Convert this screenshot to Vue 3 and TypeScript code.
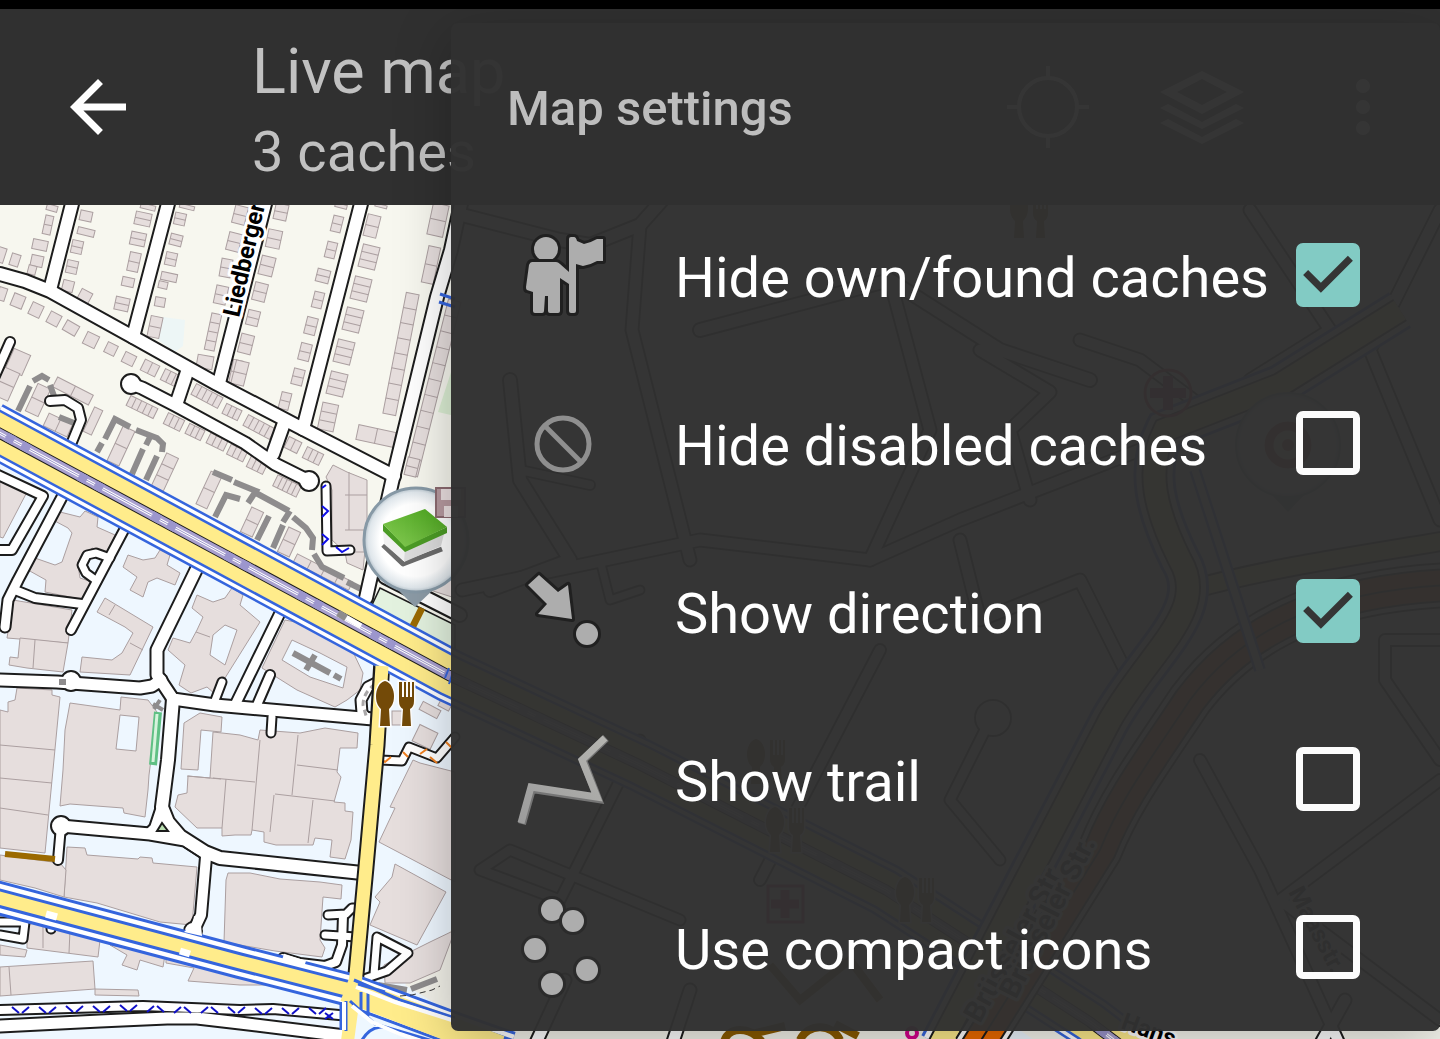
<script setup lang="ts">
import { reactive } from 'vue'

type IconName = 'owner' | 'disabled' | 'direction' | 'trail' | 'compact'

interface Setting {
  id: string
  label: string
  icon: IconName
  on: boolean
}

const settings = reactive<Setting[]>([
  { id: 'hide-own', label: 'Hide own/found caches', icon: 'owner', on: true },
  { id: 'hide-disabled', label: 'Hide disabled caches', icon: 'disabled', on: false },
  { id: 'show-direction', label: 'Show direction', icon: 'direction', on: true },
  { id: 'show-trail', label: 'Show trail', icon: 'trail', on: false },
  { id: 'compact-icons', label: 'Use compact icons', icon: 'compact', on: false },
])

// Row houses: centre x, centre y, width, height, rotation, number of units
// (negative counts split the block from left to right).
type House = [number, number, number, number, number, number]
const houses: House[] = [
  [52, 208, 11, 6, 15, 1], [48, 225, 8, 19, 12, 2], [40, 245, 15, 10, 12, 1], [37, 261, 12, 11, 12, 1], [32, 270, 8, 9, 15, 1],
  [15, 260, 9, 12, 18, 1], [1, 255, 8, 15, 18, 1], [2, 294, 8, 13, 18, 1], [18, 301, 12, 13, 22, 1], [36, 310, 12, 13, 25, 1],
  [54, 319, 12, 12, 28, 1], [71, 328, 14, 11, 30, 1], [91, 340, 13, 13, 26, 1], [111, 349, 11, 11, 26, 1], [129, 359, 12, 11, 26, 1],
  [150, 368, 16, 12, 26, -2], [171, 378, 18, 12, 26, -3], [86, 216, 12, 10, 12, 1], [86, 232, 17, 7, 14, 1], [77, 247, 11, 13, 12, 2],
  [72, 267, 11, 13, 12, 2], [68, 286, 11, 11, 14, 1], [85, 296, 12, 11, 28, 1], [143, 219, 16, 13, 12, 2], [138, 239, 15, 13, 12, 2],
  [134, 262, 11, 19, 12, 2], [128, 282, 12, 9, 12, 1], [122, 304, 14, 13, 12, 2], [148, 207, 15, 5, 14, 1], [187, 207, 15, 4, 14, 1],
  [180, 219, 11, 12, 12, 2], [176, 240, 12, 11, 14, 2], [171, 259, 11, 13, 12, 2], [169, 277, 16, 8, 12, 1], [163, 285, 9, 7, 12, 1],
  [160, 302, 10, 9, 10, 1], [155, 327, 12, 21, 12, 2], [240, 215, 13, 18, 14, 2], [234, 242, 13, 18, 14, 2], [226, 268, 11, 18, 10, 2],
  [221, 295, 12, 18, 12, 2], [213, 332, 10, 37, 12, 4], [205, 362, 16, 13, 10, 1], [236, 372, 10, 24, 12, 2],
  [281, 212, 13, 16, 12, 2], [274, 239, 14, 18, 12, 2], [267, 266, 14, 19, 14, 2], [260, 292, 13, 18, 14, 2], [253, 318, 12, 15, 14, 2],
  [246, 344, 13, 19, 14, 2], [240, 373, 13, 24, 14, 2], [341, 206, 12, 4, 14, 1], [337, 224, 10, 16, 14, 2], [331, 250, 10, 16, 14, 2],
  [323, 276, 13, 13, 14, 2], [318, 300, 10, 16, 14, 2], [311, 326, 11, 17, 14, 2], [305, 352, 11, 17, 14, 2], [298, 377, 11, 16, 14, 2],
  [285, 401, 10, 17, 14, 2], [381, 206, 12, 3, 14, 1], [372, 226, 13, 22, 14, 2], [369, 257, 17, 23, 14, 3], [361, 289, 17, 23, 14, 3],
  [353, 320, 17, 23, 14, 3], [344, 352, 17, 23, 14, 3], [337, 384, 17, 23, 14, 3], [328, 417, 16, 27, 12, 3], [438, 220, 16, 32, 12, 2],
  [431, 265, 12, 37, 12, 2], [401, 354, 13, 123, 11, 8], [433, 388, 13, 180, 14, 11], [376, 436, 38, 15, 12, -2],
  [232, 412, 17, 11, 26, -3], [259, 427, 30, 12, 28, -5], [142, 407, 30, 11, 26, -5], [174, 422, 18, 12, 26, -3], [195, 432, 17, 11, 26, -3],
  [217, 442, 19, 11, 26, -3], [237, 453, 18, 11, 26, -3], [257, 465, 18, 12, 26, -3], [207, 396, 30, 12, 28, -5], [293, 445, 14, 12, 26, -2],
  [313, 456, 18, 12, 26, -3], [287, 486, 26, 12, 26, -5], [18, 362, 18, 22, 24, 1], [6, 384, 17, 30, 24, 2], [73, 391, 40, 11, 27, -2],
  [93, 421, 9, 27, 25, 1], [38, 400, 14, 30, 25, 2], [58, 425, 26, 14, 25, -2], [121, 446, 13, 38, 25, 2], [165, 472, 13, 36, 25, 3],
  [209, 490, 12, 36, 25, 2], [252, 522, 13, 27, 25, 2], [289, 542, 13, 27, 25, 2], [323, 572, 62, 9, 27, -4], [412, 467, 12, 18, 14, 2],
  [425, 737, 20, 18, 26, 1], [430, 710, 20, 9, 28, 1], [400, 718, 16, 14, 0, 1], [446, 703, 12, 12, 28, 1],
]

const buildings: string[] = [
  '333,465 347,472 367,480 367,530 363,570 347,563 345,552 332,540 332,490 326,477',
  '0,477 27,492 3,538 0,537',
  '60,512 80,517 85,511 98,517 97,527 115,535 108,553 92,548 78,565 80,578 95,583 85,600 45,592 46,580 28,570 32,557 55,565 62,562 72,533 68,528 53,520',
  '128,555 143,560 155,558 160,550 170,555 167,565 180,573 175,585 157,578 148,582 143,597 130,590 137,577 123,567',
  '105,598 153,627 130,675 80,672 82,657 112,660 122,653 133,633 125,627 97,612',
  '13,600 72,610 68,643 7,638',
  '20,638 68,643 63,672 27,668 9,665 10,657 18,658',
  '197,595 213,602 225,598 232,588 243,595 240,605 260,622 215,694 207,687 191,693 179,685 185,665 168,650 173,638 190,643 197,630 203,617 192,608',
  '285,620 300,623 333,638 353,652 363,673 360,690 347,700 335,707 297,690 262,668',
  '17,688 52,690 52,695 60,697 45,853 0,848 0,710 8,712 8,702 15,700',
  '70,703 120,710 121,697 148,700 157,712 149,775 148,790 145,817 124,813 123,808 70,804 60,806 63,770 65,730',
  '184,723 200,713 222,717 221,732 201,730 198,770 181,769',
  '213,732 240,735 258,740 260,730 300,733 325,728 358,733 357,748 340,748 337,772 341,777 334,802 345,803 345,811 353,812 351,840 345,859 330,857 332,840 315,838 313,845 276,845 264,842 264,832 252,830 251,835 235,835 222,836 222,828 197,828 175,807 178,795 187,793 188,776 210,778',
  '67,847 85,848 87,855 138,859 140,857 152,858 153,863 197,867 192,925 160,922 97,903 64,897',
  '0,855 60,863 66,870 64,897 35,888 0,880',
  '228,873 250,873 280,879 320,882 342,885 341,899 323,897 320,940 325,948 322,957 275,951 240,945 224,942 226,880',
  '27,925 45,920 100,940 98,957 27,948',
  '0,945 27,950 25,957 0,955',
  '0,967 93,961 95,989 0,996',
  '110,945 165,955 163,967 140,960 137,970 122,965 127,955',
  '95,989 138,990 139,996 95,995',
  '166,953 196,960 240,972 275,985 240,985 188,981 194,968 166,963',
  '413,760 420,763 455,772 455,882 379,842 395,808 390,807',
  '395,864 446,892 417,945 370,925 380,902 375,897 392,877',
  '455,930 440,970 410,983 385,983 384,965 410,952 430,942',
  '384,560 455,560 455,598 430,590',
]

const courts: string[] = [
  '213,635 225,625 237,630 225,665 210,655',
  '292,640 320,653 347,667 343,688 310,677 282,660',
  '120,715 139,717 136,751 116,749',
]

const walls =
  'M260,740L252,830M298,735L292,795M297,765L338,770M213,778L255,782M275,794L335,801M313,800L308,843M274,795L270,832M226,779L222,828M0,745L55,750M0,778L52,783M0,808L48,815M109,615L115,605M130,643L143,650M35,640L33,668M196,632L210,637M43,922V948M70,930L69,953M9,967L11,995M187,776L221,779M345,530H367M345,495H367M349,472L349,530M345,552H367'

interface Road { pts: string; w: number }
const roads: Road[] = [
  { pts: '0,274 25,281 50,291 133,337 217,384 303,429 394,476', w: 12 },
  { pts: '74,196 50,290', w: 12 },
  { pts: '170,196 133,337', w: 12 },
  { pts: '267,196 219,383', w: 12 },
  { pts: '363,196 303,429', w: 12 },
  { pts: '464,190 451,250 437,297 392,482 366,598', w: 12 },
  { pts: '385,577 460,615', w: 12 },
  { pts: '131,384 142,388 175,405 245,443 275,464 309,481', w: 11 },
  { pts: '187,372 177,402', w: 12 },
  { pts: '284,423 273,454', w: 12 },
  { pts: '10,342 -6,378', w: 8 },
  { pts: '50,401 65,400 78,408 81,420 72,442', w: 8 },
  { pts: '-2,680 57,682 140,688 152,686 161,680', w: 11 },
  { pts: '197,568 180,603 157,650 157,675 173,699 215,705 373,719', w: 11 },
  { pts: '173,699 168,760 162,807 168,822 180,836 205,852 220,858 362,873', w: 12 },
  { pts: '162,807 155,828 150,833', w: 10 },
  { pts: '61,826 150,834 185,840 205,853', w: 11 },
  { pts: '61,826 58,860', w: 8 },
  { pts: '206,857 201,915 193,932', w: 10 },
  { pts: '-6,473 43,496 12,550 -4,550', w: 8 },
  { pts: '62,497 18,580 8,600 5,627', w: 9 },
  { pts: '15,590 35,598 82,604', w: 8 },
  { pts: '124,530 71,630', w: 8 },
  { pts: '110,558 96,553 87,555 82,565 86,573 97,581', w: 7 },
  { pts: '280,613 236,703', w: 9 },
  { pts: '270,675 257,705', w: 8 },
  { pts: '272,717 271,733', w: 7 },
  { pts: '222,682 214,703', w: 7 },
  { pts: '380,681 368,687 361,700 362,713 368,719', w: 9 },
  { pts: '326,486 327,551 350,550', w: 7 },
  { pts: '380,760 402,761 409,747 437,758 455,737', w: 7 },
  { pts: '0,922 25,922 23,939 0,935', w: 7 },
  { pts: '52,915 51,929', w: 7 },
  { pts: '328,915 346,914 352,908 360,908', w: 7 },
  { pts: '325,935 356,937', w: 7 },
  { pts: '343,915 342,945 336,962 325,966 300,963 283,958', w: 8 },
  { pts: '361,980 387,971 408,953 377,937 374,974', w: 7 },
  { pts: '0,1026 20,1025 100,1021 167,1018 197,1018 240,1023 345,1036', w: 11 },
  { pts: '0,1010 143,1006 240,1010 273,1009 350,1016', w: 8 },
  // streets east of the park
  { pts: '462,215 560,240 590,245 640,225 680,180', w: 12 },
  { pts: '640,225 632,330 690,560', w: 11 },
  { pts: '510,380 520,480 570,560 490,590', w: 12 },
  { pts: '462,590 700,540 870,560 960,520 1140,450', w: 11 },
  { pts: '520,470 590,485', w: 8 },
  { pts: '600,560 610,600 640,590', w: 7 },
  { pts: '700,330 890,280 1000,350 1090,380', w: 12 },
  { pts: '890,280 930,430 870,560', w: 11 },
  { pts: '980,350 1050,392 1010,430 1030,500', w: 11 },
  { pts: '960,540 980,620 1080,580 1130,680', w: 11 },
  { pts: '1080,340 1140,360 1220,420', w: 11 },
  { pts: '1250,210 1330,330 1250,380', w: 11 },
  { pts: '1440,210 1370,350 1440,520', w: 11 },
  { pts: '640,740 560,900 480,870 510,850 680,920', w: 9 },
  { pts: '880,650 760,880', w: 10 },
  { pts: '990,720 950,800 1000,860', w: 9 },
  { pts: '1200,760 1260,870 1340,1045', w: 10 },
  { pts: '1440,780 1280,900 1440,1020', w: 10 },
  { pts: '1440,640 1385,640 1385,680 1440,760', w: 10 },
  { pts: '535,1045 565,980', w: 11 },
  { pts: '672,1045 690,990', w: 11 },
  { pts: '1320,1045 1345,1000', w: 11 },
]

const discs: [number, number, number][] = [
  [131, 384, 10], [309, 481, 10], [71, 681, 10], [61, 826, 10], [193, 931, 9], [5, 627, 5], [993, 718, 18],
]

const paths =
  'M18,411L30,386M33,381L42,376L49,380M50,385L54,396M59,417L74,423M97,452L102,443M105,439L115,419L130,427M136,430L157,438L163,444L162,452M150,437L146,445M143,449L132,474M157,456L146,480M213,472L232,480M234,482L256,491L248,503M256,493L289,511M215,517L226,495L240,499M290,511L283,522M269,516L257,540M283,525L273,548M293,517L306,528L313,538L312,550M314,554L322,567L344,578M347,582L363,590M293,653L330,673M315,655L306,670M334,675L341,679M378,985L407,990M411,989L437,979'

const trunk = 'M-10,428L220,552L450,676L640,765L886,890L1090,1022L1140,1060'
const avenue = 'M-5,897L240,962L350,990L450,1027L510,1048'
const motorway = 'M1450,585C1340,590 1250,620 1190,700C1150,760 1120,800 1100,850L975,1050'
const ringRoad = 'M1400,310L1280,385L1165,430C1145,470 1155,510 1180,560C1210,610 1150,650 1110,720L940,1045'
const feeder = 'M1190,590C1260,570 1330,560 1450,540'

function splitLines(h: House): string {
  const [, , w, ht, , n] = h
  const parts = Math.abs(n)
  let d = ''
  for (let i = 1; i < parts; i++) {
    if (n > 0) {
      const y = -ht / 2 + (ht * i) / parts
      d += `M${-w / 2},${y}H${w / 2}`
    } else {
      const x = -w / 2 + (w * i) / parts
      d += `M${x},${-ht / 2}V${ht / 2}`
    }
  }
  return d
}

// Zigzag marks along the closed cycle way in the south.
const zigzags: string[] = []
for (let i = 0; i < 12; i++) {
  const x = 20 + i * 27
  const y = i < 5 ? 1010 - Math.floor(i / 2) : 1008 + Math.floor(i / 3)
  zigzags.push(i > 4 && i < 8 ? `M${x - 8},${y + 3}l7,-6M${x + 2},${y - 3}l7,6` : `M${x - 8},${y - 3}l7,6M${x + 2},${y + 3}l7,-6`)
}
const zigzagPath = zigzags.join('')

const eateries: [number, number][] = [[396, 704], [1030, 216], [767, 762], [786, 830], [916, 900]]
</script>

<template>
  <div class="app">
    <div class="status"></div>
    <header class="bar">
      <button class="bar-button" type="button" aria-label="Back">
        <svg viewBox="0 0 24 24"><path fill="#fff" d="M20 11H7.83l5.59-5.59L12 4l-8 8 8 8 1.41-1.41L7.83 13H20z" /></svg>
      </button>
      <div class="titles">
        <h1>Live map</h1>
        <p>3 caches</p>
      </div>
      <div class="actions">
        <button class="bar-button" type="button" aria-label="Follow my location">
          <svg viewBox="0 0 84 84" fill="none" stroke="#fff" stroke-width="4"><circle cx="42" cy="42" r="29" /><path d="M42 1v12M42 71v12M1 42h12M71 42h12" /></svg>
        </button>
        <button class="bar-button" type="button" aria-label="Select map">
          <svg viewBox="0 0 84 84" fill="#fff"><path fill-rule="evenodd" d="M42 6L84 27 42 49 0 27zM42 14L17 27 42 40 67 27z" /><path d="M0 43l8-4 34 18 34-18 8 4-42 21zM0 58l8-4 34 18 34-18 8 4-42 21z" /></svg>
        </button>
        <button class="bar-button more" type="button" aria-label="More options">
          <svg viewBox="0 0 84 84" fill="#fff"><circle cx="42" cy="21" r="7" /><circle cx="42" cy="42" r="7" /><circle cx="42" cy="63" r="7" /></svg>
        </button>
      </div>
    </header>

    <main class="map">
      <svg viewBox="0 205 1440 834" preserveAspectRatio="xMinYMin slice" role="img" aria-label="Street map">
        <defs>
          <radialGradient id="pinFill"><stop offset="0.7" stop-color="#fff" /><stop offset="0.92" stop-color="#dfe6eb" /><stop offset="1" stop-color="#b4c1ca" /></radialGradient>
          <linearGradient id="lid" x1="0" y1="1" x2="1" y2="0"><stop offset="0" stop-color="#86cc55" /><stop offset="1" stop-color="#4aa51c" /></linearGradient>
        </defs>
        <rect y="205" width="1440" height="900" fill="#eef7ff" />
        <path d="M0,205H1440V1100H1120L640,765L450,676L0,433Z" fill="#f7f7ef" />
        <path d="M455,925L405,985L455,1015V1045H960V850L600,745L480,760Z" fill="#f3f2ea" />
        <path d="M163,317L185,320L183,346L175,352L158,340Z" fill="#edf6f6" />
        <path d="M455,360L438,412L455,416Z" fill="#dcefd4" />

        <g class="building">
          <g v-for="(h, i) in houses" :key="'h' + i" :transform="`translate(${h[0]} ${h[1]}) rotate(${h[4]})`">
            <rect :x="-h[2] / 2" :y="-h[3] / 2" :width="h[2]" :height="h[3]" />
            <path :d="splitLines(h)" />
          </g>
          <polygon v-for="(b, i) in buildings" :key="'b' + i" :points="b" />
        </g>
        <polygon v-for="(c, i) in courts" :key="'c' + i" class="court" :points="c" />
        <path :d="walls" class="wall" />
        <path d="M380,588L455,625V650L372,605Z" fill="#e3f2df" stroke="#1c1c1c" stroke-width="1.5" />
        <path :d="paths" fill="none" stroke="#8e8c8d" stroke-width="6" />
        <path d="M158,712L153,765" stroke="#5fc084" stroke-width="8" /><path d="M157,714L153,762" stroke="#d6f3dc" stroke-width="3" />

        <g fill="none" stroke-linejoin="round" stroke-linecap="round">
          <polyline v-for="(r, i) in roads" :key="'k' + i" :points="r.pts" stroke="#1c1c1c" :stroke-width="r.w + 4" />
          <circle v-for="(d, i) in discs" :key="'o' + i" :cx="d[0]" :cy="d[1]" :r="d[2]" fill="#fff" stroke="#1c1c1c" stroke-width="2" />
          <polyline v-for="(r, i) in roads" :key="'w' + i" :points="r.pts" stroke="#fff" :stroke-width="r.w" />
        </g>
        <path d="M162,823L157,831H168Z" fill="#b9dfb0" stroke="#1c1c1c" stroke-width="2" />
        <path d="M59,682H66" stroke="#8e8c8d" stroke-width="6" />
        <path d="M153,704L163,710M160,700L154,709" stroke="#8e8c8d" stroke-width="4" />
        <path d="M375,684Q363,693 363,705L367,719" fill="none" stroke="#a9a7a8" stroke-width="3" stroke-dasharray="6 4" />
        <path d="M322,488l4,-3M322,506l6,5l-6,6M322,534l6,5l-6,6M336,547l6,5l7,-4" fill="none" stroke="#1010e8" stroke-width="2" />
        <path d="M379,757l6,5l6,-5M403,752l5,5M420,754l7,-5M430,757l7,6M446,742l6,6" fill="none" stroke="#f08020" stroke-width="2" />
        <path :d="zigzagPath" fill="none" stroke="#1010c8" stroke-width="2" />
        <path d="M325,1013l8,6M333,1013l-8,6" stroke="#1010c8" stroke-width="2" />

        <g fill="none">
          <path d="M382,660L377,745L366,867L355,985" stroke="#1c1c1c" stroke-width="17" />
          <path :d="avenue" stroke="#3565dd" stroke-width="34" />
          <path :d="avenue" stroke="#fff" stroke-width="28" />
          <path :d="avenue" stroke="#3565dd" stroke-width="19" />
          <path :d="avenue" stroke="#ffec8b" stroke-width="13" />
          <path d="M345,989L450,1029L500,1048" stroke="#ffec8b" stroke-width="25" />
          <path d="M46,914L57,917M283,957L305,964M180,951L190,954" stroke="#fff" stroke-width="7" />
          <path d="M202,918L201,925L202,936L184,932L193,923L194,916Z" fill="#fff" />

          <path :d="trunk" stroke="#3565dd" stroke-width="54" />
          <path :d="trunk" stroke="#fff" stroke-width="49" />
          <path :d="trunk" stroke="#3565dd" stroke-width="42" />
          <path :d="trunk" stroke="#ffec8b" stroke-width="37" />
          <path :d="trunk" stroke="#1c1c1c" stroke-width="11" />
          <path :d="trunk" stroke="#a9a0cf" stroke-width="9" />
          <path :d="trunk" stroke="#fff" stroke-width="3" />
          <path :d="trunk" stroke="#9c96cd" stroke-width="1" />
          <path :d="trunk" stroke="#9c96cd" stroke-width="9" stroke-dasharray="9 9 9 56" stroke-dashoffset="-18" />
          <path d="M342,615L361,626" stroke="#fff" stroke-width="5" />
          <path d="M338,613l8,5" stroke="#8e8c8d" stroke-width="7" />

          <path d="M382,666L377,745L366,867L355,985L347,1045" stroke="#ffec8b" stroke-width="13" />
          <path d="M341,1002V1030M346,1001V1031M358,984L385,992M354,980L400,1000L455,1018M350,1001L375,1024L450,1046M361,992V1014M368,992V1016M362,1040C372,1024 385,1024 400,1034" stroke="#3565dd" stroke-width="3" />
          <path d="M344,1002V1030M356,987L395,1002L455,1021M352,1006L372,1022L400,1034L440,1047" stroke="#fff" stroke-width="4" />
          <path d="M440,294L455,299M439,302L455,307" stroke="#3565dd" stroke-width="3" />
          <path d="M445,678L449,668M449,684L453,672" stroke="#3565dd" stroke-width="2" />
          <path d="M5,854L55,859" stroke="#9b6a00" stroke-width="6" />
          <path d="M422,608L413,626" stroke="#9b6a00" stroke-width="7" />
          <path d="M400,996l12,-1l20,-5l8,-4" stroke="#333" stroke-width="1" stroke-dasharray="6 4" />

          <path :d="feeder" stroke="#1c1c1c" stroke-width="21" /><path :d="feeder" stroke="#ffec8b" stroke-width="17" />
          <path :d="ringRoad" stroke="#3565dd" stroke-width="42" /><path :d="ringRoad" stroke="#fff" stroke-width="36" />
          <path :d="ringRoad" stroke="#1c1c1c" stroke-width="26" /><path :d="ringRoad" stroke="#ffec8b" stroke-width="22" />
          <path :d="motorway" stroke="#1c1c1c" stroke-width="46" /><path :d="motorway" stroke="#fff" stroke-width="42" />
          <path :d="motorway" stroke="#1c1c1c" stroke-width="34" /><path :d="motorway" stroke="#ec6a00" stroke-width="30" />
          <path :d="motorway" stroke="#1c1c1c" stroke-width="2" />
          <path d="M1195,470L1260,670" stroke="#3565dd" stroke-width="12" /><path d="M1195,470L1260,670" stroke="#fff" stroke-width="7" />
          <path d="M724,1042C728,1026 750,1026 762,1042M752,1034L785,1026M800,1040a22,22 0 0 1 40,0M835,1024L858,1036M770,965L800,1000L850,960L880,1000" stroke="#8a5a00" stroke-width="8" />
          <circle cx="912" cy="1033" r="5" stroke="#d4008c" stroke-width="4" />
          <circle cx="1168" cy="393" r="23" stroke="#c02040" stroke-width="3" />
          <path d="M1168,376V410M1150,393H1186" stroke="#a02050" stroke-width="10" />
          <rect x="768" y="886" width="35" height="36" stroke="#c02060" stroke-width="3" />
          <path d="M785,890V918M771,904H799" stroke="#c02060" stroke-width="9" />
        </g>

        <g class="streets">
          <text transform="translate(239 318) rotate(-77)">Liedberger</text>
          <text transform="translate(980 1024) rotate(-61)" class="major">Brüsseler Str.</text>
          <text transform="translate(1016 1000) rotate(-63)" class="major">Brüsseler Str.</text>
          <text transform="translate(1288 892) rotate(62)">Maasstr.</text>
          <text transform="translate(1120 1028) rotate(20)">Hans</text>
        </g>

        <g v-for="(e, i) in eateries" :key="'e' + i" :transform="`translate(${e[0]} ${e[1]})`" class="food">
          <path d="M-11 -23C-17 -22 -20 -14 -20 -8C-20 0 -17 3 -15 5L-16 22H-6L-7 5C-5 3 -2 0 -2 -8C-2 -14 -5 -22 -11 -23Z" />
          <path d="M3 -22H6V-7H8V-22H10V-7H12V-22H14V-7H16V-22H18V-3Q18 3 14 5L15 22H6L7 5Q3 3 3 -3Z" />
        </g>

        <g>
          <path d="M396,588L415,607L435,588Z" fill="#8c9ba6" />
          <circle cx="416" cy="540" r="52" fill="url(#pinFill)" stroke="#8799a6" stroke-width="3" />
          <path d="M383,545L403,564L442,549" fill="none" stroke="#6c6c6c" stroke-width="5" stroke-linejoin="round" />
          <path d="M383,530L405,549V562L384,544Z" fill="#f1f1f1" />
          <path d="M405,549L445,530L441,546L404,562Z" fill="#dcdcdc" />
          <path d="M383,524L405,546L447,527V533L405,552L383,531Z" fill="#4c9c26" />
          <path d="M383,524L425,509L447,527L405,547Z" fill="url(#lid)" />
          <path d="M436,488H465V517H436Z" fill="#b79aa0" stroke="#8c6a70" stroke-width="2" />
          <path d="M441,489H461V500H441ZM444,506H458V517H444Z" fill="#eadfe0" />
        </g>
        <g transform="translate(1288 445)">
          <path d="M-20,46L0,67L20,46Z" fill="#8c9ba6" />
          <circle r="52" fill="url(#pinFill)" stroke="#8799a6" stroke-width="2" />
          <circle r="19" fill="#f3e2da" stroke="#b04030" stroke-width="9" /><circle r="6" fill="#b04030" />
        </g>
      </svg>
    </main>

    <section class="panel" aria-labelledby="panel-title">
      <h2 id="panel-title">Map settings</h2>
      <ul>
        <li v-for="s in settings" :key="s.id">
          <label :for="s.id">
            <svg class="icon" viewBox="0 0 112 112" aria-hidden="true">
              <defs>
                <linearGradient id="trailTone" x1="0" y1="1" x2="1" y2="0"><stop offset="0" stop-color="#9c9c9c" /><stop offset="1" stop-color="#b4b4b0" /></linearGradient>
              </defs>
              <g v-if="s.icon === 'owner'" class="glyph">
                <circle cx="39" cy="30" r="12" />
                <path d="M25 43H49Q51 43 53 45L62 53V20Q62 18 64 18H67Q69 18 70 22L77 25Q83 24 90 20L96 20V42L90 42Q83 46 76 47L69 45V92Q69 94 67 94H64Q62 94 62 92V65L53 59V92Q53 94 51 94H43Q41 94 41 92V77H38L37 92Q37 94 35 94H28Q26 94 26 92V73L20 71Q19 71 19 68L22 46Q23 43 25 43Z" />
              </g>
              <g v-else-if="s.icon === 'disabled'" fill="none" stroke="#8f8f8f" stroke-width="5">
                <circle cx="56" cy="57" r="26" /><path d="M38 39L74 75" />
              </g>
              <g v-else-if="s.icon === 'direction'" class="glyph">
                <path d="M21 30L32 20 51 37 61 30 65 64 31 59 40 49Z" /><circle cx="80" cy="79" r="11" />
              </g>
              <g v-else-if="s.icon === 'trail'" fill="none">
                <path d="M15 101L25 66 91 76 76 37 99 15" stroke="#757575" stroke-width="8" />
                <path d="M14 100L24 64 90 74 75 37 98 15" stroke="url(#trailTone)" stroke-width="7" />
              </g>
              <g v-else class="glyph dots">
                <circle cx="45" cy="19" r="11" /><circle cx="66" cy="30" r="11" /><circle cx="28" cy="58" r="11" /><circle cx="80" cy="79" r="11" /><circle cx="45" cy="93" r="11" />
              </g>
            </svg>
            <span class="name">{{ s.label }}</span>
            <span class="check">
              <input :id="s.id" v-model="s.on" type="checkbox" />
              <svg v-if="s.on" viewBox="3 3 18 18" aria-hidden="true"><path fill="#353535" d="M10 17l-5-5 1.41-1.41L10 14.17l7.59-7.59L19 8z" /></svg>
            </span>
          </label>
        </li>
      </ul>
    </section>
  </div>
</template>

<style>
body {
  margin: 0;
  background: #303030;
}
</style>

<style scoped>
.app {
  position: relative;
  display: flex;
  flex-direction: column;
  height: 100vh;
  overflow: hidden;
  background: #303030;
  color: #fff;
  font-family: Roboto, "Noto Sans", sans-serif;
}
.status {
  flex: none;
  height: 9px;
  background: #000;
}
.bar {
  flex: none;
  display: flex;
  align-items: center;
  min-height: 196px;
  padding: 0 28px 0 56px;
  box-sizing: border-box;
  color: #c1c1c1;
}
.bar-button {
  flex: none;
  width: 84px;
  height: 84px;
  padding: 0;
  border: 0;
  background: none;
}
.bar-button svg {
  display: block;
  width: 84px;
  height: 84px;
  margin: 0 auto;
}
.bar-button.more {
  width: 98px;
}
.titles {
  padding: 10px 0 0 112px;
  white-space: nowrap;
}
h1,
h2,
p,
ul {
  margin: 0;
  padding: 0;
}
h1 {
  font-size: 63px;
  font-weight: 400;
  line-height: 80px;
}
p {
  font-size: 56px;
  line-height: 80px;
}
.actions {
  display: flex;
  gap: 70px;
  margin-left: auto;
}
.map {
  flex: 1;
  min-height: 0;
}
.map svg {
  display: block;
  width: 100%;
  height: 100%;
}
.building {
  fill: #e6dedd;
  stroke: #ab9fa0;
  stroke-width: 1;
}
.court {
  fill: #eef7ff;
  stroke: #ab9fa0;
  stroke-width: 1;
}
.wall {
  fill: none;
  stroke: #ab9fa0;
  stroke-width: 1;
}
.streets {
  font: 700 24px Roboto, "Noto Sans", sans-serif;
  fill: #000;
  stroke: #fff;
  stroke-width: 6;
  stroke-linejoin: round;
  paint-order: stroke;
}
.major {
  font-size: 29px;
}
.food {
  fill: #734a08;
  stroke: #fff;
  stroke-width: 3;
  paint-order: stroke;
}
.panel {
  position: absolute;
  top: 23px;
  right: 0;
  width: min(100%, 989px);
  border-radius: 7px;
  background: rgba(48, 48, 48, 0.975);
  box-shadow: 0 14px 56px rgba(0, 0, 0, 0.25);
}
h2 {
  padding: 4px 56px 0;
  font-size: 49px;
  font-weight: 500;
  line-height: 164px;
  color: #bdbdbd;
}
ul {
  list-style: none;
}
label {
  display: flex;
  align-items: center;
  height: 168px;
  padding: 0 80px 0 56px;
}
.icon {
  flex: none;
  width: 112px;
  height: 112px;
  margin-right: 56px;
}
.glyph {
  fill: #adadad;
  stroke: #202020;
  stroke-width: 6;
  stroke-linejoin: round;
  paint-order: stroke;
}
.dots {
  stroke: #2b2b2b;
}
.name {
  flex: 1;
  padding-top: 6px;
  font-size: 56px;
  line-height: 80px;
  white-space: nowrap;
}
.check {
  display: grid;
  flex: none;
}
.check input,
.check svg {
  grid-area: 1 / 1;
  width: 64px;
  height: 64px;
  margin: 0;
}
.check svg {
  pointer-events: none;
}
.check input {
  box-sizing: border-box;
  appearance: none;
  border: 7px solid #fcfcfc;
  border-radius: 7px;
}
.check input:checked {
  border-color: #82cbc4;
  background: #82cbc4;
}
</style>
